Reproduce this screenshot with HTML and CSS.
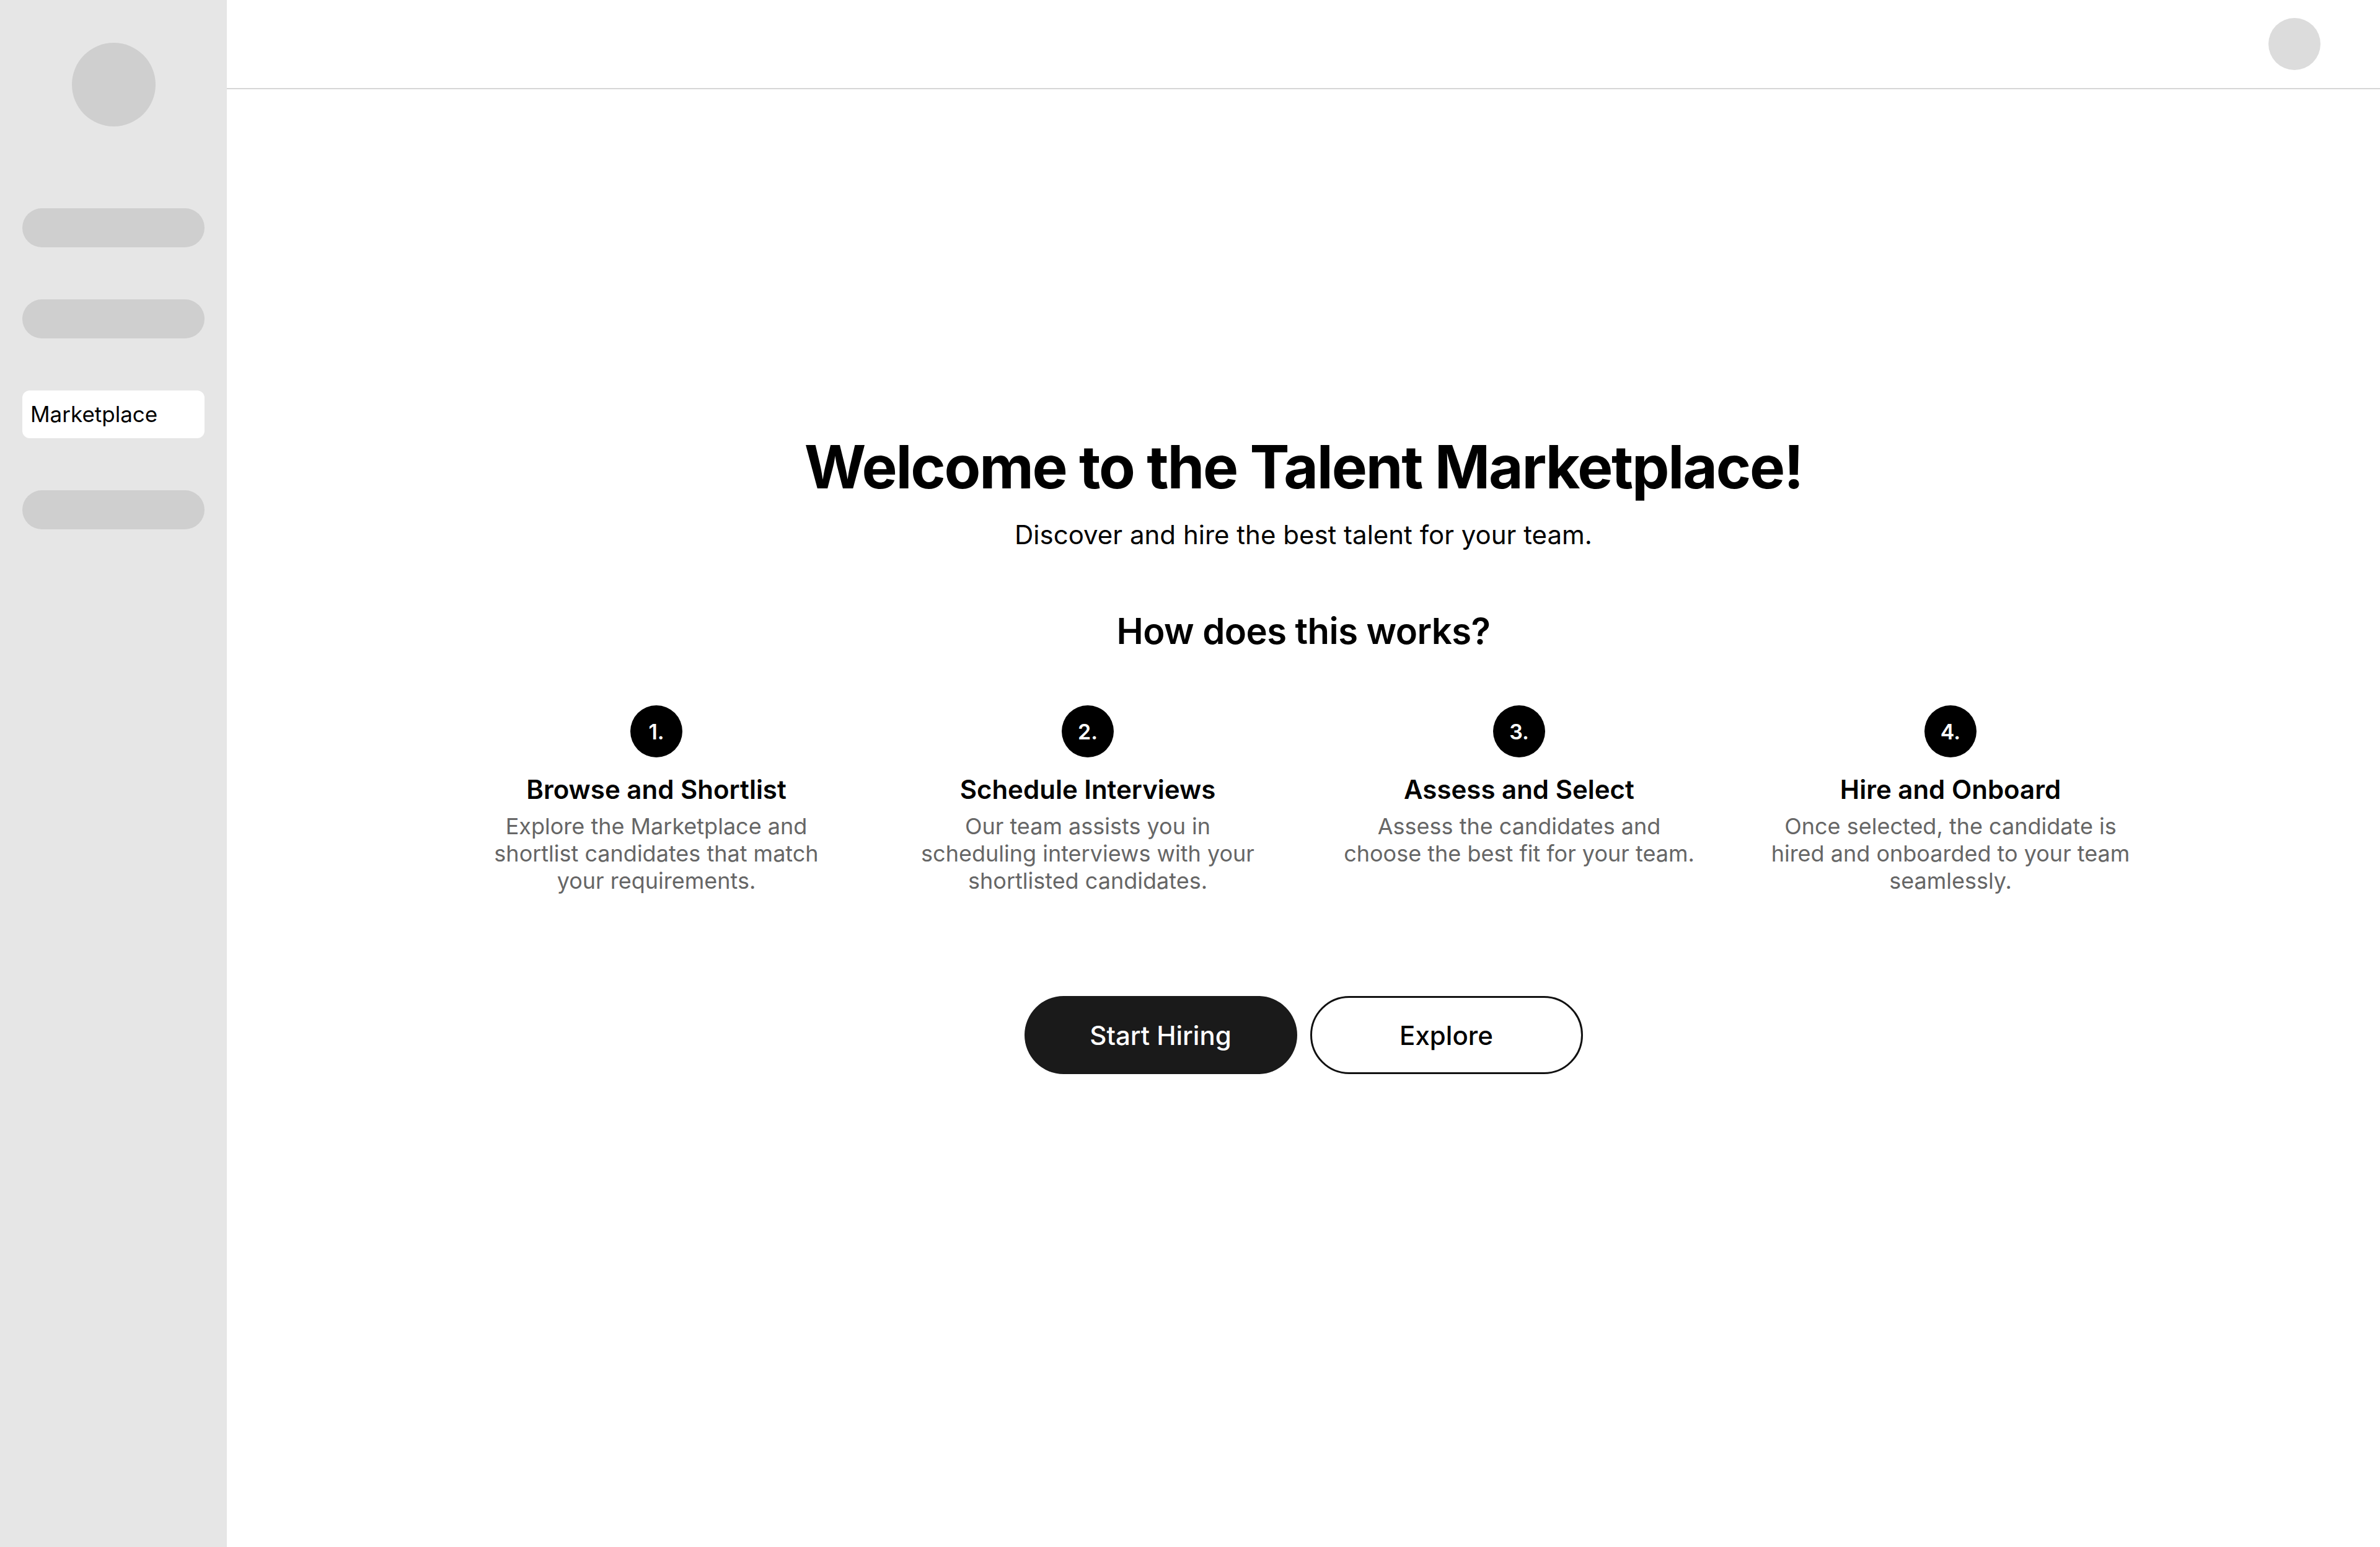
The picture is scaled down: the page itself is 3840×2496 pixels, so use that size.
FILE: index.html
```html
<!DOCTYPE html>
<html lang="en">
<head>
<meta charset="utf-8">
<title>Talent Marketplace</title>
<link rel="stylesheet" href="styles.css">
</head>
<body>
<div class="app">
  <aside class="sidebar">
    <div class="logo"></div>
    <nav class="nav">
      <div class="pill"></div>
      <div class="pill"></div>
      <div class="nav-item active">Marketplace</div>
      <div class="pill"></div>
    </nav>
  </aside>
  <div class="main">
    <header class="topbar">
      <div class="avatar"></div>
    </header>
    <section class="content">
      <h1 class="title">Welcome to the Talent Marketplace!</h1>
      <p class="subtitle">Discover and hire the best talent for your team.</p>
      <h2 class="how">How does this works?</h2>
      <div class="steps">
        <div class="step">
          <div class="num">1.</div>
          <h3 class="step-title">Browse and Shortlist</h3>
          <p class="step-desc">Explore the Marketplace and shortlist candidates that match your requirements.</p>
        </div>
        <div class="step">
          <div class="num">2.</div>
          <h3 class="step-title">Schedule Interviews</h3>
          <p class="step-desc">Our team assists you in scheduling interviews with your shortlisted candidates.</p>
        </div>
        <div class="step">
          <div class="num">3.</div>
          <h3 class="step-title">Assess and Select</h3>
          <p class="step-desc">Assess the candidates and choose the best fit for your team.</p>
        </div>
        <div class="step">
          <div class="num">4.</div>
          <h3 class="step-title">Hire and Onboard</h3>
          <p class="step-desc">Once selected, the candidate is hired and onboarded to your team seamlessly.</p>
        </div>
      </div>
      <div class="actions">
        <button class="btn btn-primary">Start Hiring</button>
        <button class="btn btn-outline">Explore</button>
      </div>
    </section>
  </div>
</div>
</body>
</html>
```

FILE: styles.css
```css
* { box-sizing: border-box; }
html, body {
  margin: 0;
  padding: 0;
  background: #ffffff;
  font-family: Inter, "Noto Sans", sans-serif;
  color: #000;
}
.app {
  display: flex;
  width: 3840px;
  height: 2496px;
}
.sidebar {
  width: 366px;
  flex: 0 0 366px;
  background: #e6e6e6;
  display: flex;
  flex-direction: column;
  align-items: center;
  padding: 69px 36px 0;
}
.logo {
  width: 135px;
  height: 135px;
  border-radius: 50%;
  background: #cfcfcf;
}
.nav {
  width: 100%;
  margin-top: 132px;
  display: flex;
  flex-direction: column;
  gap: 84px;
}
.pill {
  height: 63px;
  border-radius: 32px;
  background: #cfcfcf;
}
.nav-item {
  height: 77px;
  border-radius: 12px;
  background: #ffffff;
  font-size: 35px;
  line-height: 77px;
  padding-left: 13px;
  color: #000;
}
.main {
  flex: 1;
  display: flex;
  flex-direction: column;
}
.topbar {
  height: 144px;
  border-bottom: 2px solid #d6d6d6;
  display: flex;
  align-items: center;
  justify-content: flex-end;
  padding-right: 96px;
}
.avatar {
  width: 84px;
  height: 84px;
  border-radius: 50%;
  background: #dcdcdc;
}
.content {
  display: flex;
  flex-direction: column;
  align-items: center;
  padding-top: 552px;
}
.title {
  margin: 0;
  font-size: 96px;
  line-height: 115px;
  font-weight: 700;
  letter-spacing: -0.023em;
}
.subtitle {
  margin: 22px 0 0;
  font-size: 42px;
  line-height: 60px;
  font-weight: 400;
}
.how {
  margin: 89px 0 0;
  font-size: 58px;
  line-height: 72px;
  font-weight: 600;
  letter-spacing: -0.01em;
}
.steps {
  margin-top: 84px;
  display: grid;
  grid-template-columns: repeat(4, 584px);
  column-gap: 112px;
}
.step {
  display: flex;
  flex-direction: column;
  align-items: center;
  text-align: center;
}
.num {
  width: 84px;
  height: 84px;
  border-radius: 50%;
  background: #000;
  color: #fff;
  font-size: 34px;
  font-weight: 600;
  display: flex;
  align-items: center;
  justify-content: center;
}
.step-title {
  margin: 26px 0 0;
  font-size: 42px;
  line-height: 52px;
  font-weight: 600;
}
.step-desc {
  margin: 11px 0 0;
  max-width: 582px;
  font-size: 36px;
  line-height: 44px;
  color: #666666;
}
.actions {
  margin-top: 164px;
  display: flex;
  gap: 21px;
}
.btn {
  width: 440px;
  height: 126px;
  border-radius: 63px;
  font-family: Inter, "Noto Sans", sans-serif;
  font-size: 42px;
  font-weight: 500;
  cursor: pointer;
}
.btn-primary {
  background: #1a1a1a;
  color: #fff;
  border: none;
}
.btn-outline {
  background: #fff;
  color: #000;
  border: 3px solid #111;
}
```
